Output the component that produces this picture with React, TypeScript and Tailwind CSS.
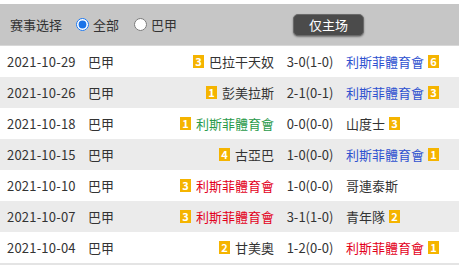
const rows = [
  { date: "2021-10-29", league: "巴甲", home: "巴拉干天奴", hr: "3", score: "3-0(1-0)", away: "利斯菲體育會", ar: "6", hc: "", ac: "blue" },
  { date: "2021-10-26", league: "巴甲", home: "彭美拉斯", hr: "1", score: "2-1(0-1)", away: "利斯菲體育會", ar: "3", hc: "", ac: "blue" },
  { date: "2021-10-18", league: "巴甲", home: "利斯菲體育會", hr: "1", score: "0-0(0-0)", away: "山度士", ar: "3", hc: "green", ac: "" },
  { date: "2021-10-15", league: "巴甲", home: "古亞巴", hr: "4", score: "1-0(0-0)", away: "利斯菲體育會", ar: "1", hc: "", ac: "blue" },
  { date: "2021-10-10", league: "巴甲", home: "利斯菲體育會", hr: "3", score: "1-0(0-0)", away: "哥連泰斯", ar: "", hc: "red", ac: "" },
  { date: "2021-10-07", league: "巴甲", home: "利斯菲體育會", hr: "3", score: "3-1(1-0)", away: "青年隊", ar: "2", hc: "red", ac: "" },
  { date: "2021-10-04", league: "巴甲", home: "甘美奧", hr: "2", score: "1-2(0-0)", away: "利斯菲體育會", ar: "1", hc: "", ac: "red" },
];

function nameColor(c: string) {
  if (c === "blue") return "text-[#2f52d0]";
  if (c === "green") return "text-[#2a9a4a]";
  if (c === "red") return "text-[#e3001b]";
  return "text-[#333]";
}

function Rank({ n }: { n: string }) {
  return (
    <span className="inline-flex items-center justify-center w-[11px] h-[13px] bg-[#f5b400] text-white text-[11px] font-bold leading-none">
      {n}
    </span>
  );
}

export default function App() {
  return (
    <div
      className="w-[459px] h-[265px] bg-white text-[13px] text-[#333] overflow-hidden"
      style={{ fontFamily: '"Noto Sans CJK SC", "Noto Sans", sans-serif' }}
    >
      <div className="mt-[4px] h-[41px] bg-[#c6c6c6] flex items-center pl-[10px]">
        <span>赛事选择</span>
        <label className="flex items-center ml-[14px]">
          <input type="radio" name="lg" defaultChecked className="w-[13px] h-[13px] m-0 accent-[#1a73e8]" />
          <span className="ml-[4px]">全部</span>
        </label>
        <label className="flex items-center ml-[15px]">
          <input type="radio" name="lg" className="w-[13px] h-[13px] m-0" />
          <span className="ml-[4px]">巴甲</span>
        </label>
        <button className="ml-[116px] w-[71px] h-[22px] rounded-[5px] bg-[#4b4b4b] text-white text-[13px] border border-[#6a6a6a] shadow-[0_1px_2px_rgba(0,0,0,0.4)]">
          仅主场
        </button>
      </div>
      <div className="border-t border-[#d8d8d8]">
        {rows.map((r, i) => (
          <div
            key={r.date}
            className={`h-[31px] flex items-center ${i % 2 === 1 ? "bg-[#ebebeb]" : "bg-white"}`}
          >
            <div className="w-[88px] pl-[7px] tracking-[0.2px]">{r.date}</div>
            <div className="w-[40px]">{r.league}</div>
            <div className="w-[146px] flex items-center justify-end gap-[5px]">
              {r.hr && <Rank n={r.hr} />}
              <span className={nameColor(r.hc)}>{r.home}</span>
            </div>
            <div className="w-[72px] text-center">{r.score}</div>
            <div className="flex-1 flex items-center gap-[4px]">
              <span className={nameColor(r.ac)}>{r.away}</span>
              {r.ar && <Rank n={r.ar} />}
            </div>
          </div>
        ))}
        <div className="h-[3px] bg-[#e4e4e4]" />
      </div>
    </div>
  );
}
